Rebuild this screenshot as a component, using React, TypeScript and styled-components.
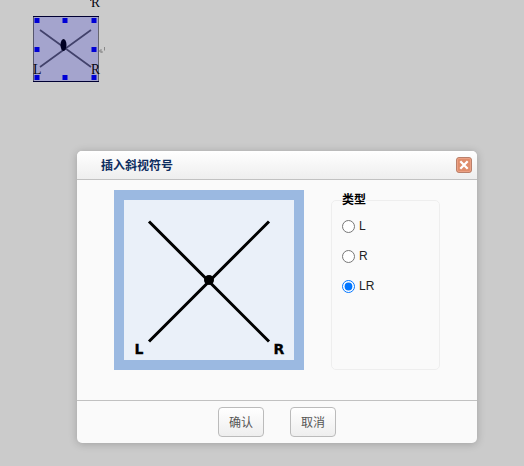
import React, { useState } from "react";
import styled, { createGlobalStyle, css } from "styled-components";

const GlobalStyle = createGlobalStyle`
  * { box-sizing: border-box; }
  body {
    margin: 0;
    background: #cbcbcb;
    overflow: hidden;
    font: 12px/18px "Liberation Sans", "Noto Sans CJK SC", sans-serif;
  }
`;

const Page = styled.main`
  position: relative;
  width: 524px;
  height: 466px;
  overflow: hidden;
`;

const Document = styled.div`
  display: flex;
  flex-direction: column;
  width: 110px;
  padding-left: 33px;
`;

const PreviousLine = styled.div`
  height: 16px;
  padding-left: 56px;
`;

const ObjectLine = styled.div`
  display: flex;
  align-items: center;
`;

const Drawing = styled.svg`
  display: block;
  flex: none;
`;

const Dialog = styled.section`
  position: absolute;
  left: 77px;
  top: 151px;
  width: 400px;
  height: 292px;
  display: flex;
  flex-direction: column;
  background: #fafafa;
  border-radius: 5px;
  box-shadow: 0 1px 8px rgba(0, 0, 0, 0.22);
  overflow: hidden;
`;

const Header = styled.header`
  display: flex;
  align-items: center;
  justify-content: space-between;
  height: 29px;
  padding: 0 5px 0 24px;
  background: linear-gradient(#fff, #eee);
  border-bottom: 1px solid #c1c1c1;
`;

const Title = styled.h1`
  margin: 0;
  padding-top: 2px;
  font-size: 12px;
  line-height: 26px;
  font-weight: 700;
  color: #0e2d5f;
`;

const CloseButton = styled.button`
  display: flex;
  width: 16px;
  height: 16px;
  padding: 0;
  border: 0;
  background: none;
`;

const Body = styled.div`
  display: flex;
  gap: 27px;
  height: 220px;
  padding: 10px 37px;
`;

const Preview = styled.div`
  width: 190px;
  height: 180px;
  border: 10px solid #9bb9e1;
  background: #eaf0f9;
`;

const Group = styled.fieldset`
  width: 109px;
  height: 180px;
  min-width: 0;
  margin: 0;
  padding: 7px 0 0 10px;
  border: 1px solid #eee;
  border-radius: 5px;
`;

const Legend = styled.legend`
  padding: 0;
  font-weight: 700;
  line-height: 20px;
  color: #000;
`;

const Option = styled.label`
  display: flex;
  align-items: center;
  gap: 4px;
  height: 18px;
  margin-bottom: 12px;
  color: #222;
`;

const Radio = styled.input`
  width: 13px;
  height: 13px;
  margin: 1px 0 0;
`;

const Footer = styled.footer`
  display: flex;
  justify-content: center;
  gap: 26px;
  height: 43px;
  padding-top: 6px;
  border-top: 1px solid #c1c1c1;
`;

const Button = styled.button`
  width: 46px;
  height: 30px;
  padding: 1px 0 0;
  border: 1px solid #bbb;
  border-radius: 4px;
  background: linear-gradient(#fff, #eee);
  font: inherit;
  color: #555;
`;

const Handle = styled.rect`
  fill: #0000d6;
`;

const Letter = styled.text<{ $bold?: boolean }>`
  ${({ $bold }) =>
    $bold
      ? css`
          font: 700 14px "DejaVu Sans", sans-serif;
          stroke: #000;
          stroke-width: 0.3px;
        `
      : css`
          font: 15px "Liberation Serif", serif;
          fill: #05050f;
        `}
`;

const handles = [[1, 2], [29, 2], [58, 2], [1, 31], [58, 31], [1, 59], [29, 59], [58, 59]];

function SelectedObject() {
  return (
    <Drawing width="76" height="66" viewBox="0 0 76 66">
      <rect width="66" height="66" fill="#a4a4cd" />
      <path d="M.5 .5V65.5" fill="none" stroke="#55556d" />
      <path d="M65.5 .5V65.5" fill="none" stroke="#666670" />
      <path d="M0 .5H66M0 65.5H66" fill="none" stroke="#000033" />
      <path d="M7 14L58 51M58 14L7 51" stroke="#42426b" strokeWidth="1.7" />
      <ellipse cx="30.5" cy="29" rx="3" ry="6" fill="#000022" />
      {handles.map(([x, y]) => (
        <Handle key={`${x}-${y}`} x={x + 0.5} y={y} width="5" height="5" />
      ))}
      <Letter x="0" y="57.5" textLength="8.5" lengthAdjust="spacingAndGlyphs">L</Letter>
      <Letter x="58" y="57.5" textLength="9" lengthAdjust="spacingAndGlyphs">R</Letter>
      <path d="M71.5 31V34.5" fill="none" stroke="#888" />
      <path d="M66.5 35H69V37M68.5 33L66.5 35L68.5 37" fill="none" stroke="#888" />
    </Drawing>
  );
}

function SymbolPreview({ type }: { type: string }) {
  return (
    <Drawing width="170" height="160" viewBox="0 0 170 160">
      <path d="M25 21.5L145 141.5M145 21.5L25 141.5" stroke="#000" strokeWidth="3" />
      <circle cx="85" cy="80" r="5" />
      {type.includes("L") && <Letter $bold x="10.5" y="154">L</Letter>}
      {type.includes("R") && <Letter $bold x="149.5" y="154">R</Letter>}
    </Drawing>
  );
}

export default function App() {
  const [type, setType] = useState("LR");
  return (
    <>
      <GlobalStyle />
      <Page>
        <Document>
          <PreviousLine>
            <Drawing width="14" height="10" viewBox="0 0 14 10">
              <path d="M1 .5H2.5" stroke="#444" />
              <Letter x="2" y="7" textLength="9" lengthAdjust="spacingAndGlyphs">R</Letter>
            </Drawing>
          </PreviousLine>
          <ObjectLine>
            <SelectedObject />
          </ObjectLine>
        </Document>
        <Dialog role="dialog" aria-label="插入斜视符号">
          <Header>
            <Title>插入斜视符号</Title>
            <CloseButton aria-label="关闭">
              <Drawing width="16" height="16" viewBox="0 0 16 16">
                <rect x=".5" y=".5" width="15" height="15" rx="2.5" fill="#df8d6b" stroke="#b9806b" />
                <rect x="1.5" y="1.5" width="13" height="13" rx="1.5" fill="none" stroke="#eba084" />
                <path d="M4.3 4.3L11.7 11.7M11.7 4.3L4.3 11.7" stroke="#fff" strokeWidth="2.3" />
              </Drawing>
            </CloseButton>
          </Header>
          <Body>
            <Preview>
              <SymbolPreview type={type} />
            </Preview>
            <Group>
              <Legend>类型</Legend>
              {["L", "R", "LR"].map((value) => (
                <Option key={value}>
                  <Radio
                    type="radio"
                    name="type"
                    checked={type === value}
                    onChange={() => setType(value)}
                  />
                  {value}
                </Option>
              ))}
            </Group>
          </Body>
          <Footer>
            <Button>确认</Button>
            <Button>取消</Button>
          </Footer>
        </Dialog>
      </Page>
    </>
  );
}
